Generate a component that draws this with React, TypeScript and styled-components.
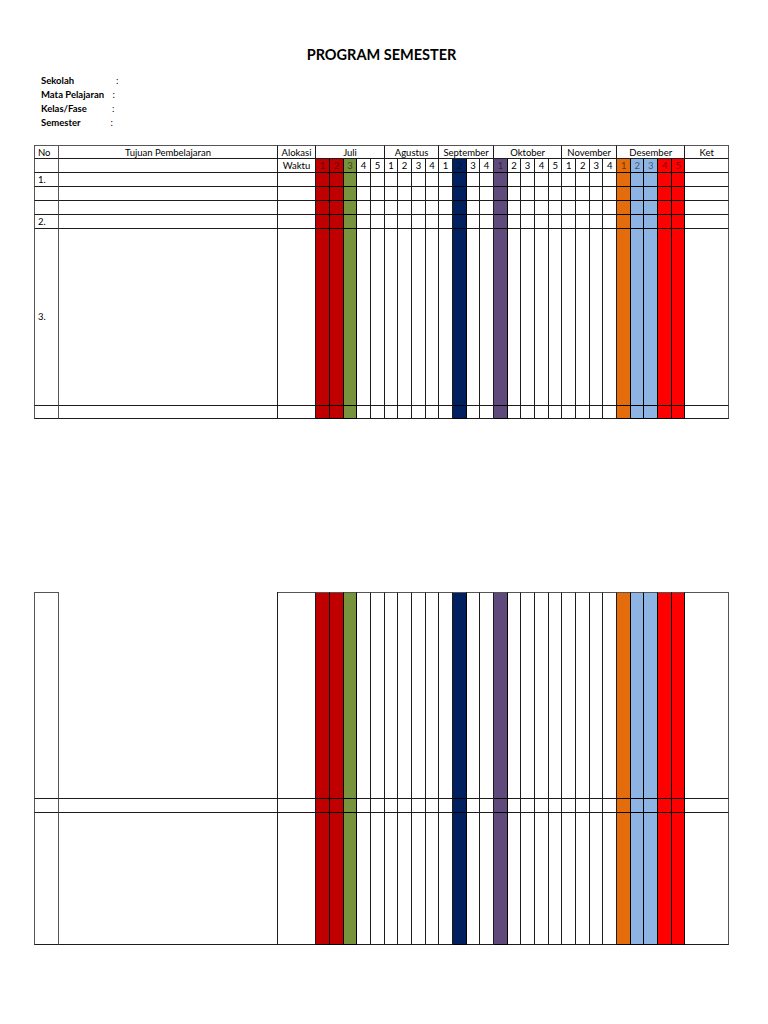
import React from 'react';
import styled, { createGlobalStyle } from 'styled-components';

const GlobalStyle = createGlobalStyle`
  html, body { margin: 0; padding: 0; background: #ffffff; }
  body { font-family: Lato, "Open Sans", "Liberation Sans", sans-serif; color: #000; }
`;

const MONTHS: [string, number][] = [
  ['Juli', 5],
  ['Agustus', 4],
  ['September', 4],
  ['Oktober', 5],
  ['November', 4],
  ['Desember', 5],
];

const WEEK_COLORS: Record<number, string> = {
  0: '#C00000',
  1: '#C00000',
  2: '#77933C',
  10: '#002060',
  13: '#604A7B',
  22: '#E46C0A',
  23: '#8DB4E2',
  24: '#8DB4E2',
  25: '#FF0000',
  26: '#FF0000',
};

const WEEK_COUNT = MONTHS.reduce((s, m) => s + m[1], 0);
const weekWidth = (i: number) => (i % 3 === 2 ? 13 : 14);

const Page = styled.div`
  width: 695px;
  margin-left: 34px;
  padding-top: 46px;
  padding-bottom: 40px;
`;

const Title = styled.h1`
  margin: 0;
  font-size: 14.5px;
  line-height: 18px;
  font-weight: 700;
  text-align: center;
`;

const Info = styled.div`
  margin-top: 10px;
  padding-left: 7px;
  display: flex;
  flex-direction: column;
`;

const InfoRow = styled.div`
  display: flex;
  height: 14px;
  line-height: 14px;
  font-size: 9.5px;
  font-weight: 700;
`;

const InfoLabel = styled.span<{ $w: number }>`
  width: ${(p) => p.$w}px;
  flex: none;
`;

const Colon = styled.span`
  font-weight: 400;
`;

const Grid = styled.table<{ $gap: number }>`
  margin-top: ${(p) => p.$gap}px;
  border-collapse: separate;
  border-spacing: 0;
  table-layout: fixed;
  width: 695px;
  font-size: 9.5px;
  line-height: 11px;
`;

const Col = styled.col<{ $w: number }>`
  width: ${(p) => p.$w}px;
`;

const Row = styled.tr<{ $h: number }>`
  height: ${(p) => p.$h}px;
`;

const LINE = '#1c1c1c';
const EDGE = '#555555';

const Cell = styled.td<{
  $bg?: string;
  $left?: boolean;
  $first?: boolean;
  $last?: boolean;
  $top?: boolean;
  $muted?: boolean;
}>`
  box-sizing: border-box;
  border-right: 1px solid ${(p) => (p.$last || p.$first ? EDGE : p.$bg ? '#000' : LINE)};
  border-bottom: 1px solid ${(p) => (p.$bg ? '#000' : LINE)};
  border-left: ${(p) => (p.$first ? `1px solid ${EDGE}` : 'none')};
  border-top: ${(p) => (p.$top ? `1px solid ${EDGE}` : 'none')};
  background: ${(p) => p.$bg ?? 'transparent'};
  color: ${(p) => (p.$muted ? 'rgba(0,0,0,0.55)' : '#000')};
  padding: 0 0 0 ${(p) => (p.$left ? '3px' : '0')};
  text-align: ${(p) => (p.$left ? 'left' : 'center')};
  vertical-align: middle;
  white-space: nowrap;
  overflow: hidden;
`;

const Cols = () => (
  <colgroup>
    <Col $w={25} />
    <Col $w={219} />
    <Col $w={38} />
    {Array.from({ length: WEEK_COUNT }, (_, i) => (
      <Col key={i} $w={weekWidth(i)} />
    ))}
    <Col $w={44} />
  </colgroup>
);

const WeekCells = ({ top }: { top?: boolean }) => (
  <>
    {Array.from({ length: WEEK_COUNT }, (_, i) => (
      <Cell key={i} $bg={WEEK_COLORS[i]} $top={top} />
    ))}
  </>
);

const BodyRow = ({
  h,
  label,
  top,
  openMiddleTop,
}: {
  h: number;
  label?: string;
  top?: boolean;
  openMiddleTop?: boolean;
}) => (
  <Row $h={h}>
    <Cell $left $first $top={top}>
      {label}
    </Cell>
    <Cell $top={top && !openMiddleTop} />
    <Cell $top={top} />
    <WeekCells top={top} />
    <Cell $top={top} $last />
  </Row>
);

const weekNumbers: number[] = MONTHS.flatMap(([, n]) => Array.from({ length: n }, (_, i) => i + 1));

export default function App() {
  return (
    <>
      <GlobalStyle />
      <Page>
        <Title>PROGRAM SEMESTER</Title>
        <Info>
          <InfoRow>
            <InfoLabel $w={75}>Sekolah</InfoLabel>
            <Colon>:</Colon>
          </InfoRow>
          <InfoRow>
            <InfoLabel $w={71.5}>Mata Pelajaran</InfoLabel>
            <Colon>:</Colon>
          </InfoRow>
          <InfoRow>
            <InfoLabel $w={71}>Kelas/Fase</InfoLabel>
            <Colon>:</Colon>
          </InfoRow>
          <InfoRow>
            <InfoLabel $w={69.5}>Semester</InfoLabel>
            <Colon>:</Colon>
          </InfoRow>
        </Info>

        <Grid $gap={15}>
          <Cols />
          <tbody>
            <Row $h={14}>
              <Cell $left $first $top>
                No
              </Cell>
              <Cell $top>Tujuan Pembelajaran</Cell>
              <Cell $top>Alokasi</Cell>
              {MONTHS.map(([name, n]) => (
                <Cell key={name} colSpan={n} $top>
                  {name}
                </Cell>
              ))}
              <Cell $top $last>
                Ket
              </Cell>
            </Row>
            <Row $h={14}>
              <Cell $first />
              <Cell />
              <Cell>Waktu</Cell>
              {weekNumbers.map((n, i) => (
                <Cell key={i} $bg={WEEK_COLORS[i]} $muted={!!WEEK_COLORS[i]}>
                  {n}
                </Cell>
              ))}
              <Cell $last />
            </Row>
            <BodyRow h={14} label="1." />
            <BodyRow h={14} />
            <BodyRow h={14} />
            <BodyRow h={14} label="2." />
            <BodyRow h={176.5} label="3." />
            <BodyRow h={13.5} />
          </tbody>
        </Grid>

        <Grid $gap={172.5}>
          <Cols />
          <tbody>
            <BodyRow h={207} top openMiddleTop />
            <BodyRow h={14} />
            <BodyRow h={132} />
          </tbody>
        </Grid>
      </Page>
    </>
  );
}
